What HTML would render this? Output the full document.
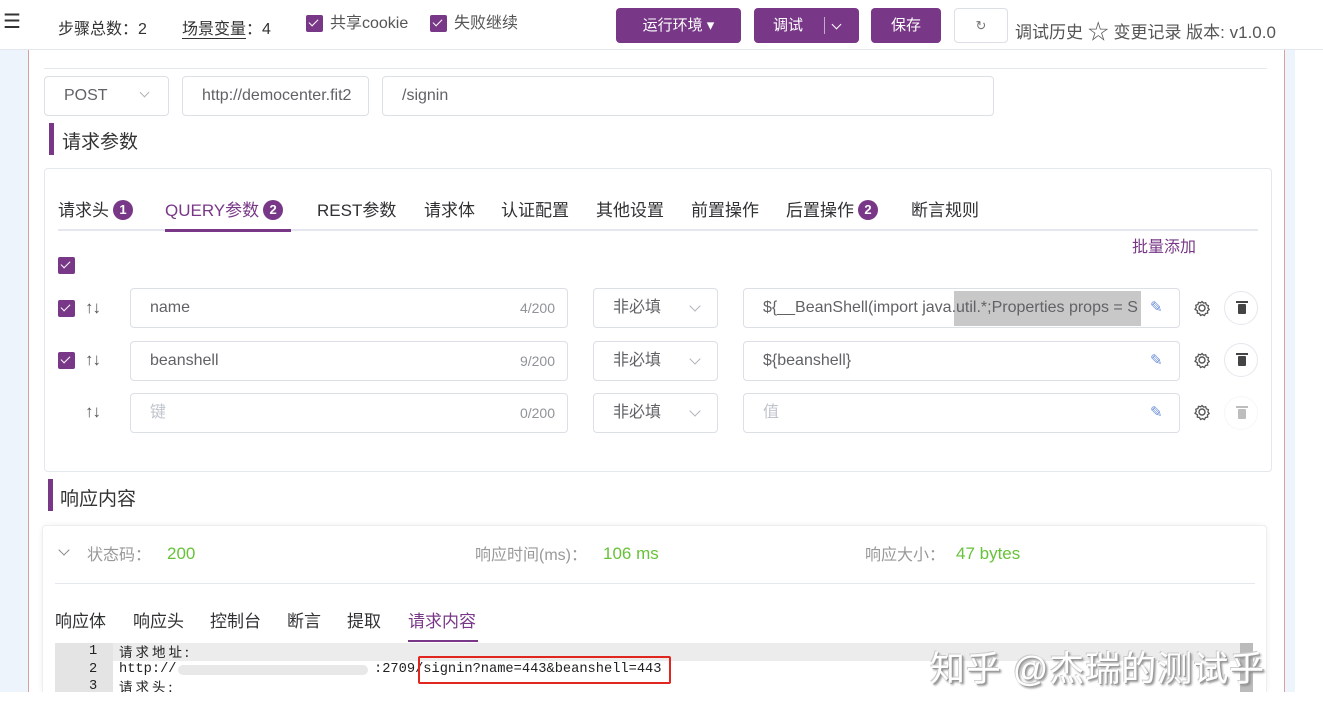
<!DOCTYPE html>
<html><head><meta charset="utf-8"><style>
*{box-sizing:border-box;margin:0;padding:0}
html,body{width:1323px;height:717px;overflow:hidden}
body{position:relative;background:#fff;font-family:"Liberation Sans","Noto Sans CJK SC",sans-serif;color:#333}
.a{position:absolute}
.cb{position:absolute;width:17px;height:17px;background:#783887;border-radius:2px}
.cb:after{content:"";position:absolute;left:5px;top:2px;width:4px;height:8px;border:solid #fff;border-width:0 1.5px 1.5px 0;transform:rotate(45deg)}
.inp{position:absolute;border:1px solid #dcdfe6;border-radius:4px;background:#fff;font-size:16px;color:#606266;line-height:38px;padding:0 19px}
.btn{position:absolute;background:#783887;color:#fff;border-radius:4px;font-size:15px;text-align:center;line-height:35px;top:8px;height:35px}
.badge{display:inline-block;width:20px;height:20px;border-radius:10px;background:#783887;color:#fff;font-size:13px;font-weight:bold;line-height:20px;text-align:center;vertical-align:2px;margin-left:4px}
.tab{position:absolute;top:196px;font-size:17px;color:#303133}
.sel{position:absolute;width:125px;height:40px;border:1px solid #dcdfe6;border-radius:4px;font-size:16px;color:#606266;padding:0 19px;line-height:38px}
.sel:after{content:"";position:absolute;right:18px;top:13px;width:7px;height:7px;border:solid #b0b3b8;border-width:0 1px 1px 0;transform:rotate(45deg)}
.cnt{position:absolute;right:12px;font-size:14px;color:#909399;top:0}
.trash{position:absolute;width:34px;height:34px;border:1px solid #e4e7ed;border-radius:17px}
.trash i{position:absolute;left:13px;top:12px;width:8px;height:10px;background:#444;border-radius:1px}
.trash i:before{content:"";position:absolute;left:-2px;top:-3px;width:12px;height:2px;background:#444}
.pen{position:absolute;color:#6a8fd8;font-size:15px}
.arr{position:absolute;font-size:17px;color:#555;letter-spacing:-1px}
.code{font-family:"Liberation Mono",monospace;font-size:13.7px;color:#222;line-height:17px;white-space:nowrap}
.cj{font-family:"Noto Sans CJK SC",sans-serif;font-size:13.5px;line-height:17px;letter-spacing:3px;color:#222}
</style></head><body>
<div class="a" style="left:0;top:50px;width:28px;height:642px;background:#eef4fb"></div>
<div class="a" style="left:28px;top:50px;width:1px;height:642px;background:#d9a0a0"></div>
<div class="a" style="left:1284px;top:50px;width:1px;height:642px;background:#d9a0a0"></div>
<div class="a" style="left:1285px;top:50px;width:10px;height:642px;background:#eef4fb"></div>
<!-- header -->
<div class="a" style="left:0;top:0;width:1323px;height:50px;background:#fff;border-bottom:1px solid #e4e7ed"></div>
<div class="a" style="left:3px;top:9px;font-size:20px;color:#333">☰</div>
<div class="a" style="left:58px;top:15px;font-size:16px;color:#333">步骤总数：2</div>
<div class="a" style="left:182px;top:15px;font-size:16px;color:#333"><span style="border-bottom:1px solid #333">场景变量</span>：4</div>
<div class="cb" style="left:306px;top:15px"></div>
<div class="a" style="left:330px;top:14px;font-size:16px;color:#555;line-height:20px">共享cookie</div>
<div class="cb" style="left:430px;top:15px"></div>
<div class="a" style="left:454px;top:14px;font-size:16px;color:#555;line-height:20px">失败继续</div>
<div class="btn" style="left:616px;width:125px">运行环境 ▾</div>
<div class="btn" style="left:754px;width:105px"><span style="position:absolute;left:19px">调试</span><span style="position:absolute;left:70px;top:9px;width:1px;height:17px;background:#c9a8d0"></span><span style="position:absolute;left:79px;top:13px;width:7px;height:7px;border:solid #fff;border-width:0 1px 1px 0;transform:rotate(45deg)"></span></div>
<div class="btn" style="left:871px;width:70px">保存</div>
<div class="a" style="left:954px;top:8px;width:54px;height:35px;border:1px solid #dcdfe6;border-radius:4px;text-align:center;line-height:33px;font-size:13px;color:#777">↻</div>
<div class="a" style="left:1015px;top:16px;font-size:17px;color:#555;white-space:nowrap">调试历史 <span style="font-size:21px;vertical-align:-1px">☆</span> 变更记录 版本: v1.0.0</div>
<div class="a" style="left:44px;top:68px;width:1223px;height:1px;background:#e4e7ed"></div>
<!-- url row -->
<div class="inp" style="left:44px;top:76px;width:125px;height:40px">POST</div>
<div class="a" style="left:141px;top:89px;width:7px;height:7px;border:solid #b0b3b8;border-width:0 1px 1px 0;transform:rotate(45deg)"></div>
<div class="inp" style="left:182px;top:76px;width:187px;height:40px;overflow:hidden;white-space:nowrap">http://democenter.fit2</div>
<div class="inp" style="left:382px;top:76px;width:612px;height:40px">/signin</div>
<div class="a" style="left:49px;top:123px;width:5px;height:32px;background:#783887"></div>
<div class="a" style="left:62px;top:127px;font-size:19px;color:#333">请求参数</div>
<!-- params box -->
<div class="a" style="left:44px;top:168px;width:1228px;height:304px;border:1px solid #e4e7ed;border-radius:4px"></div>
<div class="tab" style="left:58px">请求头<span class="badge">1</span></div>
<div class="tab" style="left:165px;color:#783887">QUERY参数<span class="badge">2</span></div>
<div class="tab" style="left:317px">REST参数</div>
<div class="tab" style="left:424px">请求体</div>
<div class="tab" style="left:501px">认证配置</div>
<div class="tab" style="left:596px">其他设置</div>
<div class="tab" style="left:691px">前置操作</div>
<div class="tab" style="left:786px">后置操作<span class="badge">2</span></div>
<div class="tab" style="left:911px">断言规则</div>
<div class="a" style="left:58px;top:229px;width:1200px;height:2px;background:#e4e7ed"></div>
<div class="a" style="left:165px;top:229px;width:126px;height:3px;background:#783887"></div>
<div class="a" style="left:1132px;top:233px;font-size:16px;color:#783887">批量添加</div>
<div class="cb" style="left:58px;top:257px"></div>

<svg width="0" height="0" style="position:absolute"><defs><g id="g"><circle cx="8" cy="8" r="3" fill="none" stroke="#555" stroke-width="1.4"/><path d="M8 1.5l1.5 1.6 2.2-.4.6 2.1 2.1.8-.5 2.2 1.3 1.7-1.7 1.4.2 2.2-2.2.4-1 2-2-.9-2 .9-1-2-2.2-.4.2-2.2L1 9.2 2.3 7.5 1.8 5.3l2.1-.8.6-2.1 2.2.4z" fill="none" stroke="#555" stroke-width="1.3"/></g></defs></svg>

<div class="cb" style="left:58px;top:300px"></div>
<div class="arr" style="left:85px;top:298px">↑↓</div>
<div class="inp" style="left:130px;top:288px;width:438px;height:40px">name<span class="cnt">4/200</span></div>
<div class="sel" style="left:593px;top:288px">非必填</div>
<div class="inp" style="left:743px;top:288px;width:437px;height:40px;overflow:hidden;white-space:nowrap"><span style="position:absolute;left:210px;top:2px;width:187px;height:35px;background:#c8c8c8"></span><span style="position:relative">${__BeanShell(import java.util.*;Properties props = S</span></div>
<div class="pen" style="left:1150px;top:298px">✎</div>
<svg class="a" style="left:1194px;top:300px" width="17" height="17"><use href="#g"/></svg>
<div class="trash" style="left:1224px;top:291px"><i></i></div>

<div class="cb" style="left:58px;top:352px"></div>
<div class="arr" style="left:85px;top:350px">↑↓</div>
<div class="inp" style="left:130px;top:341px;width:438px;height:40px">beanshell<span class="cnt">9/200</span></div>
<div class="sel" style="left:593px;top:341px">非必填</div>
<div class="inp" style="left:743px;top:341px;width:437px;height:40px">${beanshell}</div>
<div class="pen" style="left:1150px;top:351px">✎</div>
<svg class="a" style="left:1194px;top:352px" width="17" height="17"><use href="#g"/></svg>
<div class="trash" style="left:1224px;top:343px"><i></i></div>

<div class="arr" style="left:85px;top:402px">↑↓</div>
<div class="inp" style="left:130px;top:393px;width:438px;height:40px;color:#c0c4cc">键<span class="cnt">0/200</span></div>
<div class="sel" style="left:593px;top:393px">非必填</div>
<div class="inp" style="left:743px;top:393px;width:437px;height:40px;color:#c0c4cc">值</div>
<div class="pen" style="left:1150px;top:403px">✎</div>
<svg class="a" style="left:1194px;top:404px" width="17" height="17"><use href="#g"/></svg>
<div class="trash" style="left:1224px;top:396px;opacity:.35"><i></i></div>

<div class="a" style="left:48px;top:479px;width:5px;height:32px;background:#783887"></div>
<div class="a" style="left:60px;top:484px;font-size:19px;color:#333">响应内容</div>
<!-- response -->
<div class="a" style="left:42px;top:525px;width:1225px;height:167px;border:1px solid #eee;border-bottom:none;border-radius:4px 4px 0 0;box-shadow:0 0 6px rgba(0,0,0,.06)"></div>
<div class="a" style="left:60px;top:546px;width:8px;height:8px;border:solid #888;border-width:0 1px 1px 0;transform:rotate(45deg)"></div>
<div class="a" style="left:87px;top:541px;font-size:16px;color:#999">状态码：</div>
<div class="a" style="left:167px;top:544px;font-size:17px;color:#67c23a">200</div>
<div class="a" style="left:475px;top:541px;font-size:16px;color:#999">响应时间(ms)：</div>
<div class="a" style="left:603px;top:544px;font-size:17px;color:#67c23a">106 ms</div>
<div class="a" style="left:865px;top:541px;font-size:16px;color:#999">响应大小：</div>
<div class="a" style="left:956px;top:544px;font-size:17px;color:#67c23a">47 bytes</div>
<div class="a" style="left:55px;top:583px;width:1200px;height:1px;background:#e4e7ed"></div>
<div class="a" style="left:55px;top:607px;font-size:17px;color:#303133">响应体</div>
<div class="a" style="left:133px;top:607px;font-size:17px;color:#303133">响应头</div>
<div class="a" style="left:210px;top:607px;font-size:17px;color:#303133">控制台</div>
<div class="a" style="left:287px;top:607px;font-size:17px;color:#303133">断言</div>
<div class="a" style="left:347px;top:607px;font-size:17px;color:#303133">提取</div>
<div class="a" style="left:408px;top:607px;font-size:17px;color:#783887">请求内容</div>
<div class="a" style="left:408px;top:640px;width:70px;height:2px;background:#783887"></div>
<div class="a" style="left:55px;top:643px;width:1198px;height:18px;background:#ececec"></div>
<div class="a" style="left:55px;top:643px;width:58px;height:49px;background:#e4e4e4"></div>
<div class="a" style="left:1240px;top:643px;width:13px;height:49px;background:#bbb"></div>
<div class="a code" style="left:89px;top:643px">1</div>
<div class="a code" style="left:89px;top:661px">2</div>
<div class="a code" style="left:89px;top:678px">3</div>
<div class="a cj" style="left:119px;top:643px">请求地址:</div>
<div class="a code" style="left:119px;top:661px">http://</div>
<div class="a" style="left:178px;top:665px;width:190px;height:10px;background:#e8e8e8;border-radius:5px"></div>
<div class="a code" style="left:374px;top:661px">:2709/signin?name=443&amp;beanshell=443</div>
<div class="a cj" style="left:119px;top:678px">请求头:</div>
<div class="a" style="left:418px;top:656px;width:253px;height:28px;border:2px solid #e0261f;border-radius:2px"></div>
<div class="a" style="left:0;top:692px;width:1323px;height:25px;background:#fff"></div>
<div class="a" style="left:930px;top:641px;font-size:35px;color:#fff;text-shadow:1px 1px 0 #999,-1px -1px 0 #ccc,2px 2px 2px #888;letter-spacing:1px;white-space:nowrap">知乎 @杰瑞的测试乎</div>
</body></html>
